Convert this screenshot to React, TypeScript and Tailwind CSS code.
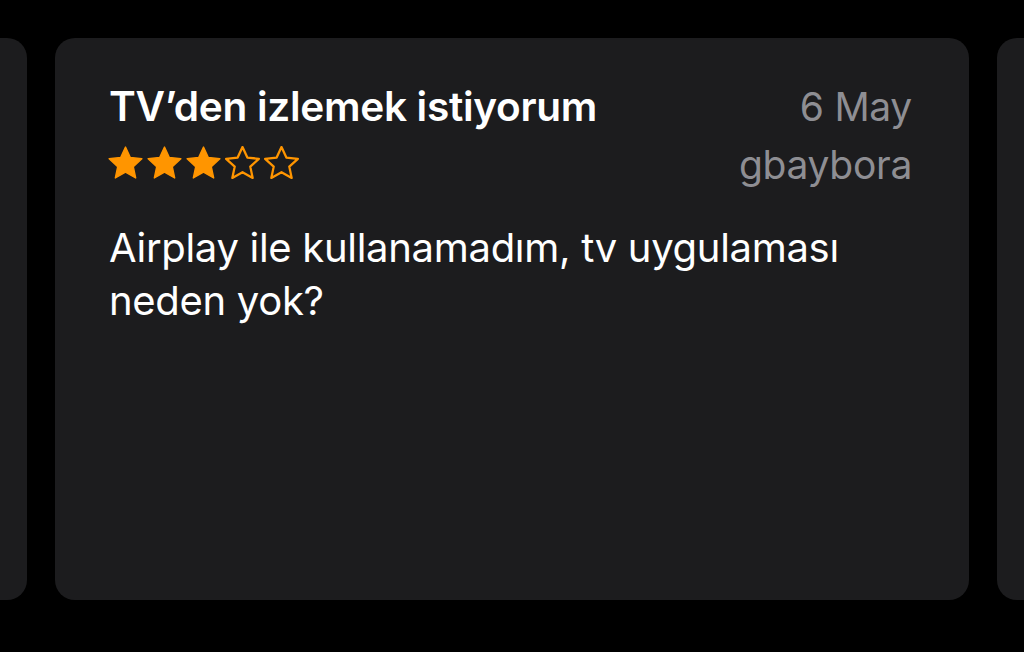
import React from "react";

function Star({ filled }: { filled: boolean }) {
  return (
    <svg width="35" height="33" viewBox="2.0 2.0 20 18.9" className="shrink-0">
      <path
        d="M12 2.6l2.78 6.02 6.6.72-4.92 4.47 1.37 6.5L12 17.0l-5.83 3.31 1.37-6.5-4.92-4.47 6.6-.72z"
        fill={filled ? "#ff9500" : "none"}
        stroke="#ff9500"
        strokeWidth={filled ? 0.8 : 1.3}
        strokeLinejoin="round"
      />
    </svg>
  );
}

export default function App() {
  const rating = 3;
  return (
    <main
      className="w-[1024px] h-[652px] bg-black overflow-hidden flex gap-[28px] pt-[38px] pb-[52px]"
      style={{ fontFamily: "Inter, 'Noto Sans', sans-serif" }}
    >
      <div className="w-[27px] shrink-0 bg-[#1c1c1e] rounded-r-[20px]" />
      <section className="w-[914px] shrink-0 bg-[#1c1c1e] rounded-[20px] pl-[54px] pr-[57px] pt-[46px]">
        <div className="flex justify-between items-start">
          <div>
            <h2 className="text-white text-[40.6px] font-semibold leading-[46px] tracking-[-0.3px]">
              TV’den izlemek istiyorum
            </h2>
            <div className="flex gap-[4px] mt-[16px] -ml-[1px]">
              {[1, 2, 3, 4, 5].map((i) => (
                <Star key={i} filled={i <= rating} />
              ))}
            </div>
          </div>
          <div className="text-right text-[#8e8e93] text-[39px] leading-[46px] tracking-[-0.3px]">
            <div>6 May</div>
            <div className="mt-[12px]">gbaybora</div>
          </div>
        </div>
        <p className="text-white text-[40px] leading-[53px] mt-[33px] w-[780px] tracking-[-0.3px]">
          Airplay ile kullanamadım, tv uygulaması neden yok?
        </p>
      </section>
      <div className="w-[40px] shrink-0 bg-[#1c1c1e] rounded-l-[20px]" />
    </main>
  );
}
